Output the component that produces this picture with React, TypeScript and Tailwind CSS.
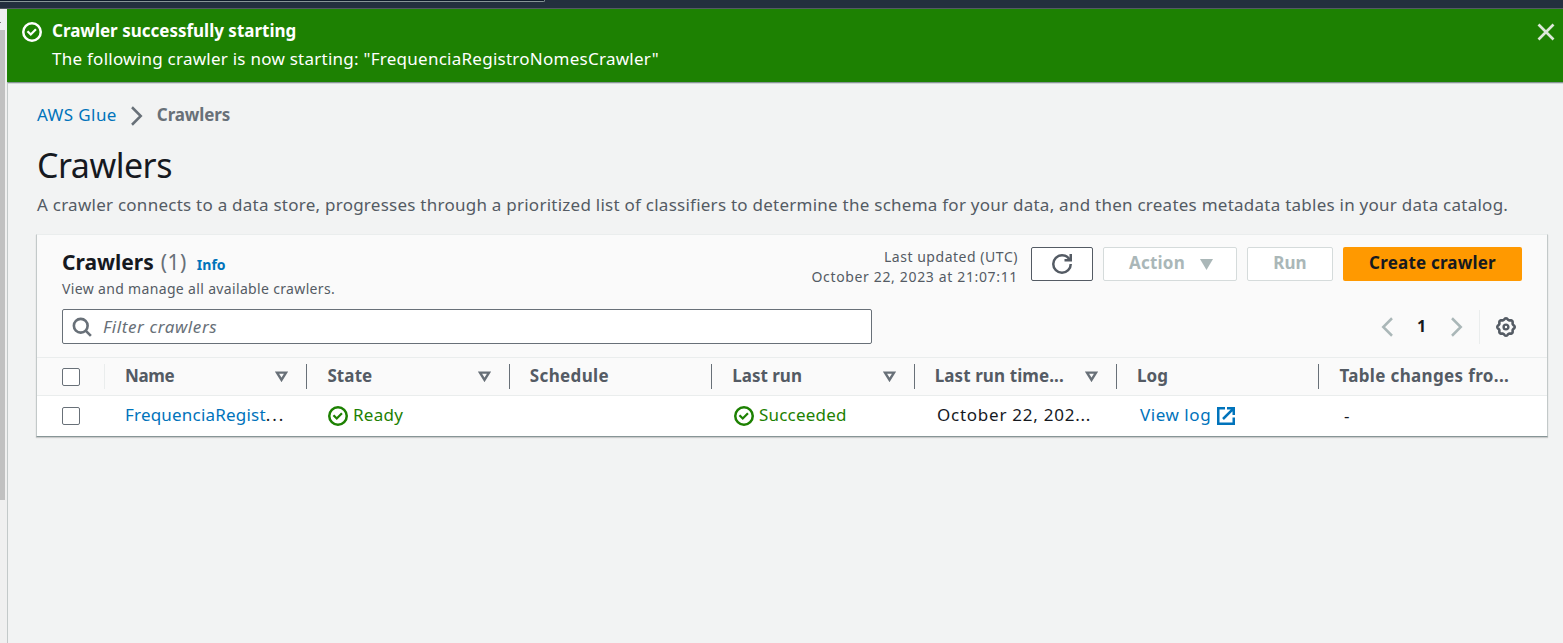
import type { ReactNode } from 'react';

function CheckCircle({ className }: { className: string }) {
  return (
    <svg viewBox="0 0 16 16" className={className} fill="none" stroke="currentColor" strokeWidth="2">
      <circle cx="8" cy="8" r="7" />
      <path d="m5 8 2 2 3.521-3.521" strokeWidth="1.8" strokeLinecap="square" />
    </svg>
  );
}

function Chevron({ className, left = false }: { className: string; left?: boolean }) {
  return (
    <svg viewBox="0 0 16 16" className={className} fill="none" stroke="currentColor" strokeWidth="2">
      <path d={left ? 'M12 1 5 8l7 7' : 'M4 1 11 8l-7 7'} />
    </svg>
  );
}

function SearchIcon() {
  return (
    <svg viewBox="0 0 16 16" className="size-[20px] text-[#687078]" fill="none" stroke="currentColor" strokeWidth="2.1">
      <circle cx="7" cy="7" r="5.5" />
      <path d="m10.9 10.9 4.2 4.2" />
    </svg>
  );
}

function RefreshIcon() {
  return (
    <svg viewBox="0 0 16 16" className="size-[20px]" fill="none" stroke="currentColor" strokeWidth="2">
      <path d="M15 8c0 3.87-3.13 7-7 7s-7-3.13-7-7 3.13-7 7-7c2.8 0 5.2 1.6 6.3 4" />
      <path d="M10 5h5V0" />
    </svg>
  );
}

const gearOutline = Array.from({ length: 96 }, (_, i) => {
  const angle = (i / 96) * Math.PI * 2;
  const radius = 8 + 0.7 * Math.cos(8 * angle);
  return `${(10 + radius * Math.cos(angle)).toFixed(2)},${(10 + radius * Math.sin(angle)).toFixed(2)}`;
}).join(' ');

function GearIcon() {
  return (
    <svg viewBox="0 0 20 20" className="size-[20px] text-[#545b64]" fill="none" stroke="currentColor">
      <polygon points={gearOutline} strokeWidth="2.6" strokeLinejoin="round" />
      <circle cx="10" cy="10" r="2.4" strokeWidth="2.4" />
    </svg>
  );
}

function ExternalIcon() {
  return (
    <svg viewBox="0 0 18 18" className="size-[18px]" fill="none" stroke="currentColor" strokeWidth="2.5">
      <path d="M8 1.25H1.25v15.5h15.5V10.5" />
      <path d="M10 1.25h6.75V8M16.4 1.6 6 12" />
    </svg>
  );
}

function SortIcon() {
  return (
    <svg viewBox="0 0 13 11" className="mr-[18px] h-[11px] w-[13px] shrink-0 text-[#687078]" fill="none" stroke="currentColor" strokeWidth="2.4">
      <path d="M2 1.6h9L6.5 8.9z" />
    </svg>
  );
}

function Column({ children, sortable = false, last = false }: { children: ReactNode; sortable?: boolean; last?: boolean }) {
  return (
    <div className={`flex h-[25px] shrink-0 items-center justify-between pl-[20px] ${last ? 'w-[228px]' : 'w-[202.42px] border-r border-[#687078]'}`}>
      <span className="pb-[1px]">{children}</span>
      {sortable && <SortIcon />}
    </div>
  );
}

function Checkbox() {
  return <span className="ml-[25px] block size-[18px] rounded-[2px] border border-[#687078] bg-white" />;
}

export default function App() {
  return (
    <div className="flex h-[643px] w-full flex-col overflow-hidden bg-[#f2f3f3] font-['Noto_Sans',sans-serif] text-[17px] leading-[28px] text-[#16191f]">
      <div className="h-[9px] shrink-0 border-b border-[#545b64] bg-[#232f3e]">
        <div className="h-[2px] w-[545px] rounded-br-[2px] border-r border-b border-[#879596] bg-[#0f1b2a]" />
      </div>
      <div className="flex min-h-0 flex-1">
        <div className="flex w-[7px] shrink-0 flex-col bg-[#f0f0f0]">
          <div className="h-[21px] pt-[13px]">
            <div className="h-px w-px bg-[#777]" />
          </div>
          <div className="h-[470px] w-[5px] bg-[#c1c1c1]" />
        </div>
        <div className="flex min-w-0 flex-1 flex-col">
          <div className="flex h-[73px] shrink-0 bg-[#1d8102] pl-[15px] text-white">
            <CheckCircle className="mt-[13px] size-[20px]" />
            <div className="ml-[10px] pt-[8px] whitespace-nowrap">
              <p className="font-bold">Crawler successfully starting</p>
              <p className="tracking-[0.256px]">The following crawler is now starting: "FrequenciaRegistroNomesCrawler"</p>
            </div>
            <svg viewBox="0 0 18 18" className="mt-[14px] mr-[8px] ml-auto size-[18px] text-[#dde8da]" fill="none" stroke="currentColor" strokeWidth="2.7">
              <path d="m1.5 1.5 15 15M16.5 1.5l-15 15" />
            </svg>
          </div>
          <div className="min-h-0 flex-1 border-t border-l border-t-[#879596] border-l-[#c3c9c9] shadow-[inset_0_1px_0_#d2d7d7]">
            <div className="mt-[18px] flex h-[28px] items-center pl-[29px] whitespace-nowrap">
              <a className="tracking-[0.4px] text-[#0073bb]">AWS Glue</a>
              <Chevron className="mt-[2px] ml-[10px] size-[20px] text-[#687078]" />
              <span className="ml-[10px] font-bold tracking-[-0.1px] text-[#687078]">Crawlers</span>
            </div>
            <h1 className="mt-[13px] pl-[29px] text-[34px] leading-[46px] tracking-[-0.5px]">Crawlers</h1>
            <p className="mt-[3px] pl-[29px] tracking-[0.249px] whitespace-nowrap text-[#545b64]">
              A crawler connects to a data store, progresses through a prioritized list of classifiers to determine the schema for your data, and then creates metadata tables in your data catalog.
            </p>
            <section className="mt-[15px] ml-[28px] h-[203px] w-[1512px] border border-t-[#eaeded] border-r-[#c3c9c9] border-b-[#879596] border-l-[#c3c9c9] bg-white shadow-[0_1px_1px_#0000002a]">
              <div className="h-[122px] bg-[#fafafa] pl-[25px]">
                <div className="flex h-[74px] whitespace-nowrap">
                  <div className="pt-[12px]">
                    <h2 className="flex items-baseline text-[21px] leading-[30px]">
                      <span className="font-bold">Crawlers</span>
                      <span className="ml-[7px] tracking-[0.5px] text-[#687078]">(1)</span>
                      <a className="ml-[10px] text-[14px] font-bold text-[#0073bb]">Info</a>
                    </h2>
                    <p className="mt-[-1px] text-[14px] leading-[20px] tracking-[0.34px] text-[#545b64]">View and manage all available crawlers.</p>
                  </div>
                  <div className="mr-[25px] ml-auto flex pt-[12px]">
                    <div className="mr-[13px] text-right text-[14px] leading-[20px] text-[#545b64]">
                      <p className="tracking-[0.53px]">Last updated (UTC)</p>
                      <p className="tracking-[0.65px]">October 22, 2023 at 21:07:11</p>
                    </div>
                    <div className="flex gap-[10px] font-bold">
                      <button className="flex h-[34px] w-[62px] items-center justify-center rounded-[2px] border border-[#545b64] bg-white text-[#545b64]">
                        <RefreshIcon />
                      </button>
                      <button className="flex h-[34px] w-[134px] items-center justify-center rounded-[2px] border border-[#d5dbdb] bg-white pl-[2px] text-[#aab7b8]">
                        <span className="pb-[2px] tracking-[0.2px]">Action</span>
                        <svg viewBox="0 0 13 11" className="ml-[15px] h-[11px] w-[13px]" fill="currentColor">
                          <path d="M0 0h13L6.5 11z" />
                        </svg>
                      </button>
                      <button className="flex h-[34px] w-[86px] items-center justify-center rounded-[2px] border border-[#d5dbdb] bg-white pb-[2px] text-[#aab7b8]">Run</button>
                      <button className="flex h-[34px] w-[179px] items-center justify-center rounded-[2px] bg-[#ff9900] pb-[2px] tracking-[0.2px]">Create crawler</button>
                    </div>
                  </div>
                </div>
                <div className="flex items-center">
                  <div className="flex h-[35px] w-[810px] items-center rounded-[2px] border border-[#687078] bg-white pl-[9px]">
                    <SearchIcon />
                    <span className="ml-[11px] tracking-[0.6px] text-[#687078] italic">Filter crawlers</span>
                  </div>
                  <div className="mr-[31px] ml-auto flex items-center">
                    <Chevron left className="size-[20px] text-[#aab7b8]" />
                    <span className="w-[50px] pr-px pb-[2px] text-center text-[16px] font-bold">1</span>
                    <Chevron className="size-[20px] text-[#aab7b8]" />
                    <span className="ml-[12px] h-[34px] w-px bg-[#eaeded]" />
                    <span className="ml-[16px]">
                      <GearIcon />
                    </span>
                  </div>
                </div>
              </div>
              <div className="flex h-[39px] items-center border-y border-[#eaeded] bg-[#fafafa] font-bold whitespace-nowrap text-[#545b64]">
                <div className="flex h-[25px] w-[68px] shrink-0 items-center border-r border-[#eaeded]">
                  <Checkbox />
                </div>
                <Column sortable><span className="tracking-[-0.4px]">Name</span></Column>
                <Column sortable><span className="tracking-[0.1px]">State</span></Column>
                <Column><span className="tracking-[0.35px]">Schedule</span></Column>
                <Column sortable><span>Last run</span></Column>
                <Column sortable><span className="tracking-[0.1px]">Last run time...</span></Column>
                <Column><span>Log</span></Column>
                <Column last><span className="tracking-[0.35px]">Table changes fro...</span></Column>
              </div>
              <div className="flex h-[40px] items-center whitespace-nowrap">
                <div className="w-[88px] shrink-0">
                  <Checkbox />
                </div>
                <div className="w-[202px] shrink-0 pb-[2px] tracking-[0.2px]">
                  <a className="text-[#0073bb]">FrequenciaRegist</a><span className="tracking-[2px]">...</span>
                </div>
                <div className="flex w-[407px] shrink-0 items-center gap-[5px] tracking-[0.25px] text-[#1d8102]">
                  <CheckCircle className="ml-px size-[20px]" />
                  <span className="pb-[2px]">Ready</span>
                </div>
                <div className="flex w-[203px] shrink-0 items-center gap-[5px] tracking-[0.2px] text-[#1d8102]">
                  <CheckCircle className="size-[20px]" />
                  <span className="pb-[2px]">Succeeded</span>
                </div>
                <div className="w-[203px] shrink-0 pb-[2px] tracking-[0.75px]">October 22, 202...</div>
                <a className="flex w-[204px] shrink-0 items-center gap-[6px] tracking-[0.55px] text-[#0073bb]">
                  <span className="pb-[2px]">View log</span>
                  <ExternalIcon />
                </a>
                <div>-</div>
              </div>
            </section>
          </div>
        </div>
      </div>
    </div>
  );
}
